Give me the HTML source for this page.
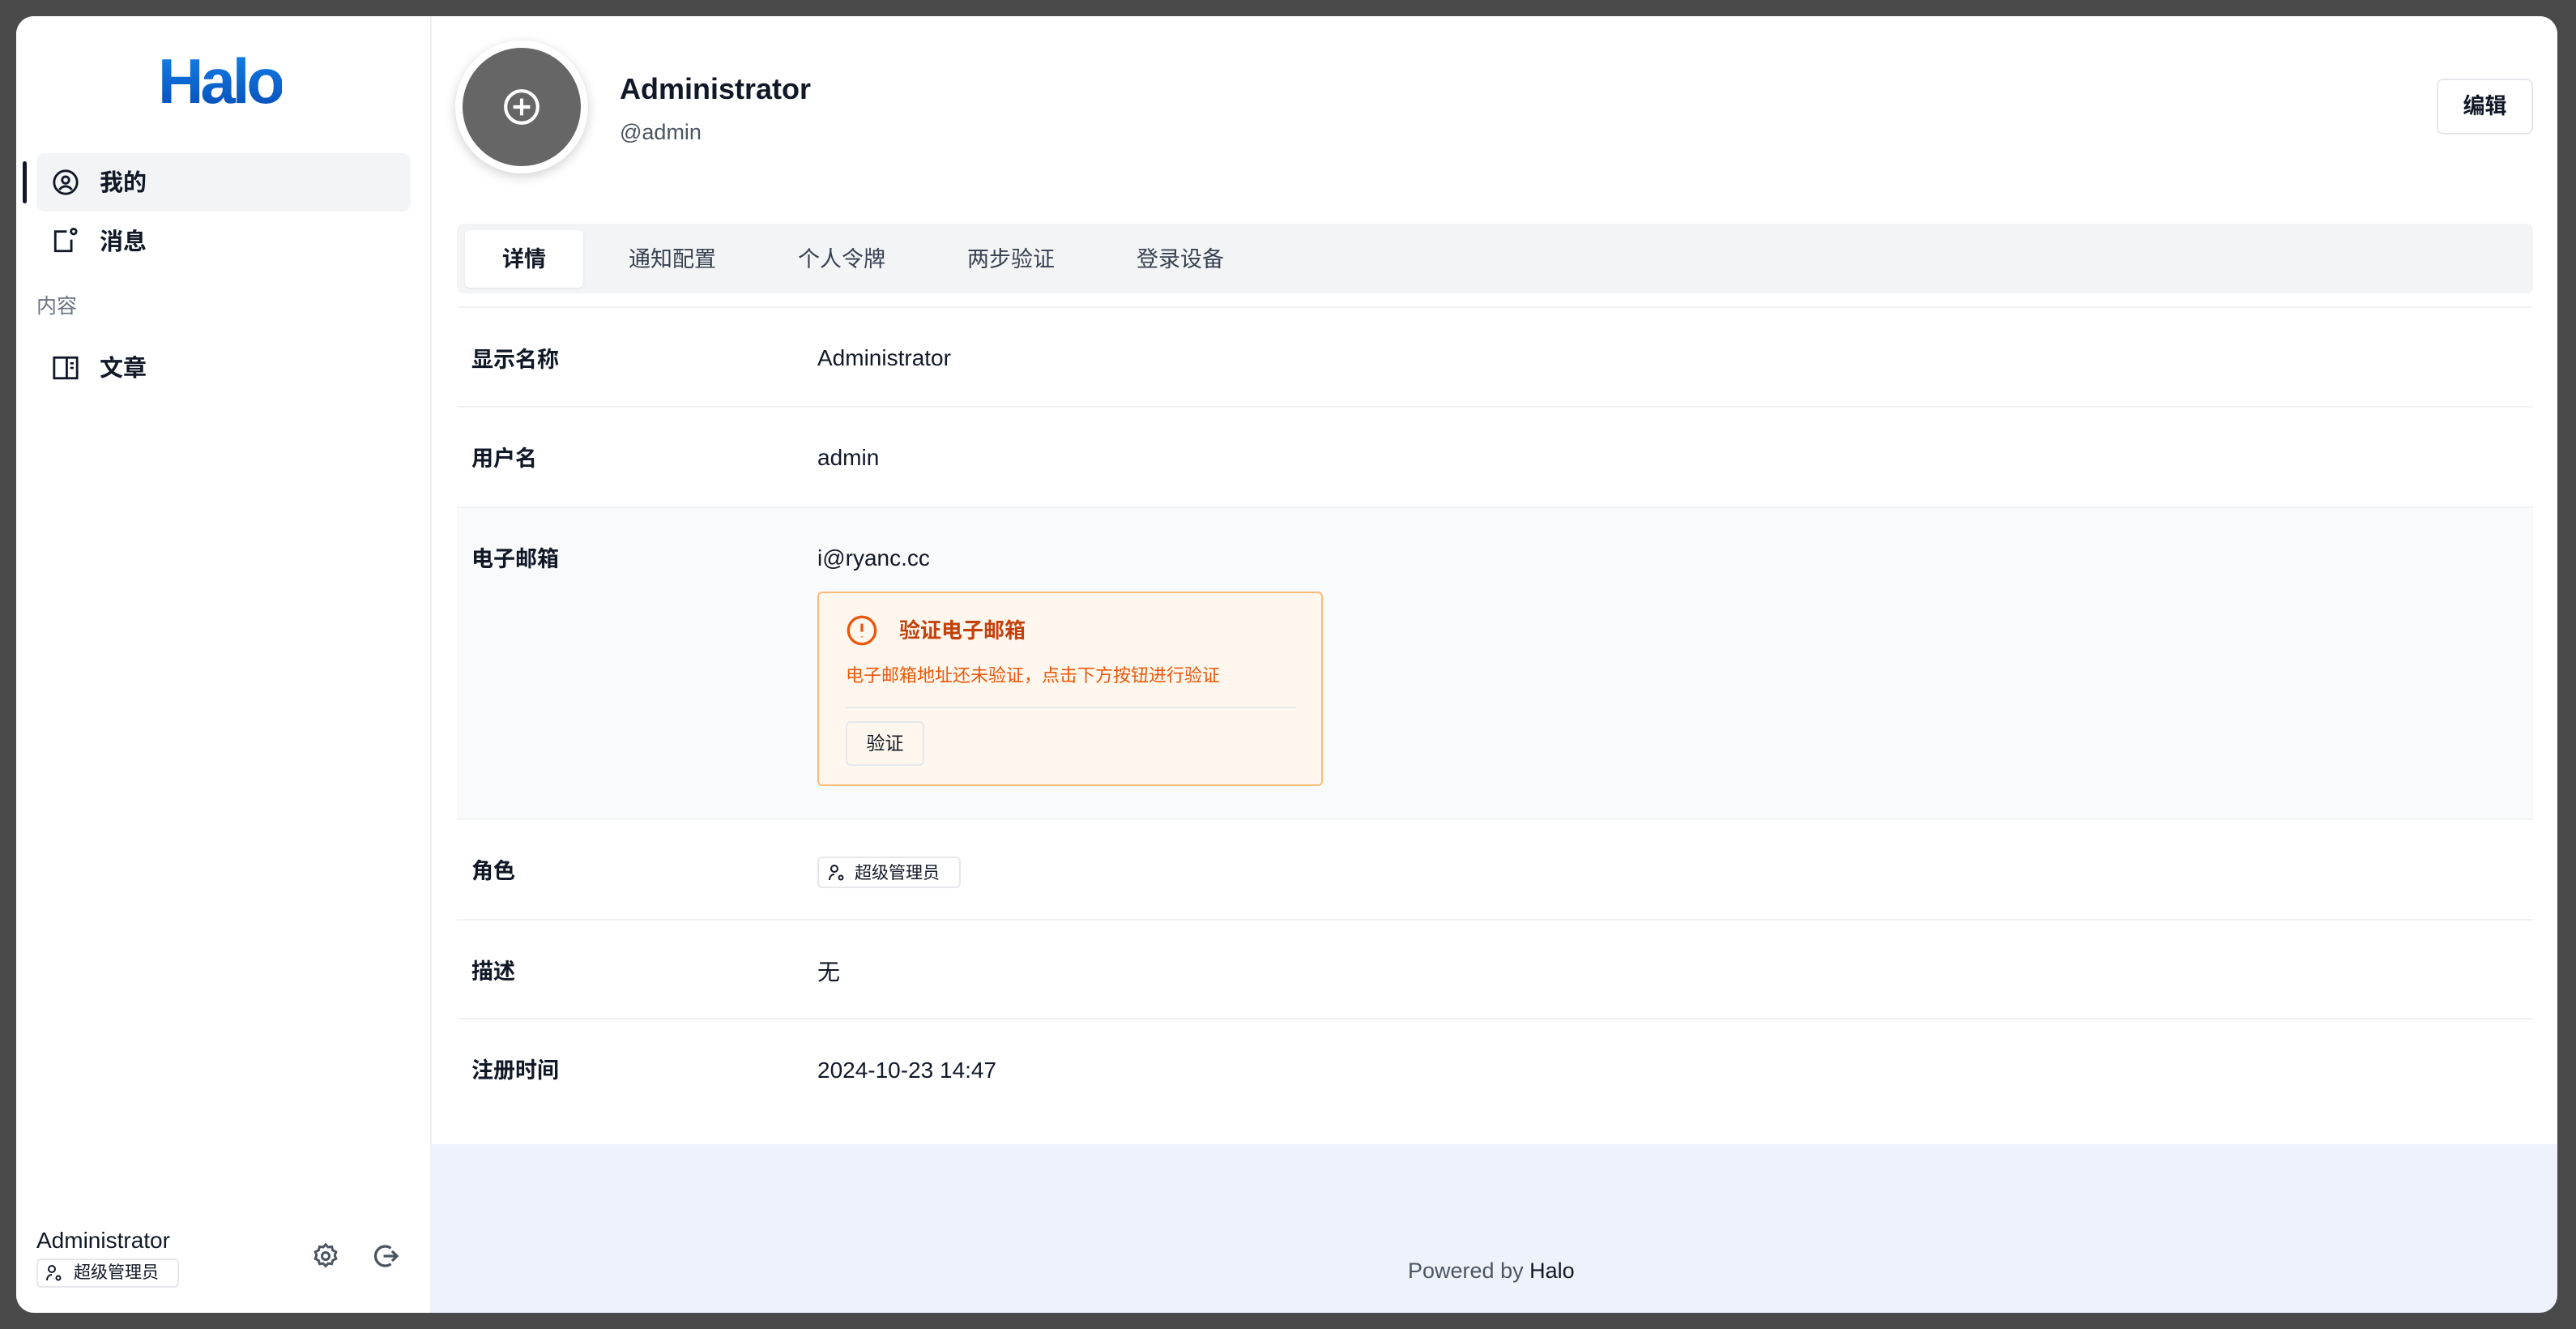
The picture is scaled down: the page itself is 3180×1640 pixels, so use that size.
<!DOCTYPE html>
<html><head><meta charset="utf-8"><style>
*{box-sizing:border-box;margin:0;padding:0}
body{width:3180px;height:1640px;background:#4a4a4a;font-family:"Liberation Sans","Noto Sans CJK SC",sans-serif;position:relative;overflow:hidden;color:#111827;line-height:1.2}
.win{position:absolute;left:20px;top:20px;width:3137px;height:1600px;background:#eef2fa;border-radius:22px;overflow:hidden}
.side{position:absolute;left:0;top:0;width:513px;height:1600px;background:#fff;border-right:2px solid #eef0f3}
.a{position:absolute;white-space:nowrap}
.main{position:absolute;left:513px;top:0;width:2624px;height:1392px;background:#fff}
.row{position:absolute;left:31px;width:2563px;border-bottom:2px solid #f1f2f4}
.lbl{position:absolute;left:18px;font-size:27px;font-weight:600;color:#111827}
.val{position:absolute;left:445px;font-size:28px;color:#111827}
.tab{position:absolute;top:284px;font-size:27px;color:#374151;transform:translateX(-50%)}
</style></head><body>
<div class="win">
<div class="side">
  <div class="a" style="left:175px;top:34px;font-size:78px;font-weight:700;letter-spacing:-4px;background:linear-gradient(180deg,#1485f0,#0648b0);-webkit-background-clip:text;color:transparent">Halo</div>
  <div class="a" style="left:8px;top:179px;width:5px;height:52px;background:#111827;border-radius:3px"></div>
  <div class="a" style="left:25px;top:169px;width:462px;height:72px;background:#f3f4f6;border-radius:10px"></div>
  <svg class="a" style="left:44px;top:188px" width="34" height="34" viewBox="0 0 24 24" fill="none" stroke="#111827" stroke-width="2"><circle cx="12" cy="12" r="10"/><circle cx="12" cy="10" r="3"/><path d="M6.5 18.5c1.5-2 3.3-3 5.5-3s4 1 5.5 3"/></svg>
  <div class="a" style="left:103px;top:189px;font-size:29px;font-weight:600">我的</div>
  <svg class="a" style="left:44px;top:260px" width="34" height="34" viewBox="0 0 24 24" fill="none" stroke="#111827" stroke-width="2"><path d="M13 4H3v17h14V11"/><circle cx="19" cy="4" r="2.3"/></svg>
  <div class="a" style="left:103px;top:262px;font-size:29px;font-weight:600">消息</div>
  <div class="a" style="left:25px;top:343px;font-size:25px;color:#6b7280">内容</div>
  <svg class="a" style="left:44px;top:417px" width="34" height="34" viewBox="0 0 24 24" fill="none" stroke="#111827" stroke-width="2"><rect x="2" y="3" width="20" height="18"/><path d="M13 3v18M16 8h3M16 12h3"/></svg>
  <div class="a" style="left:103px;top:418px;font-size:29px;font-weight:600">文章</div>
  <div class="a" style="left:25px;top:1494px;font-size:28px">Administrator</div>
  <div class="a" style="left:25px;top:1533px;width:176px;height:36px;border:2px solid #e5e7eb;border-radius:6px;font-size:21px;padding:3px 0 0 44px">超级管理员</div>
  <svg class="a" style="left:35px;top:1539px" width="24" height="24" viewBox="0 0 24 24" fill="none" stroke="#111827" stroke-width="2"><circle cx="9" cy="7" r="4"/><path d="M3 21c0-4 2.5-7 6-7"/><circle cx="17" cy="18" r="2.5"/></svg>
  <svg class="a" style="left:364px;top:1512px" width="36" height="36" viewBox="0 0 24 24" fill="none" stroke="#4b5563" stroke-width="2"><path d="M12 2.5l2 2.2 3-.4.8 2.9 2.7 1.4-1 2.8 1 2.8-2.7 1.4-.8 2.9-3-.4-2 2.2-2-2.2-3 .4-.8-2.9-2.7-1.4 1-2.8-1-2.8 2.7-1.4.8-2.9 3 .4z"/><circle cx="12" cy="12" r="3"/></svg>
  <svg class="a" style="left:437px;top:1512px" width="36" height="36" viewBox="0 0 24 24" fill="none" stroke="#4b5563" stroke-width="2.2"><path d="M17 5.5A8 8 0 1 0 17 18.5"/><path d="M11 12h11M18 8l4 4-4 4"/></svg>
</div>
<div class="main">
  <div class="a" style="left:29px;top:30px;width:164px;height:164px;border-radius:50%;background:#fff;box-shadow:0 4px 14px rgba(0,0,0,.18)"></div>
  <div class="a" style="left:38px;top:39px;width:146px;height:146px;border-radius:50%;background:#666"></div>
  <svg class="a" style="left:86px;top:87px" width="50" height="50" viewBox="0 0 24 24" fill="none" stroke="#fff" stroke-width="2"><circle cx="12" cy="12" r="9.5"/><path d="M12 7v10M7 12h10"/></svg>
  <div class="a" style="left:232px;top:68px;font-size:36px;font-weight:700">Administrator</div>
  <div class="a" style="left:232px;top:127px;font-size:27px;color:#4b5563">@admin</div>
  <div class="a" style="left:2475px;top:77px;width:119px;height:69px;border:2px solid #e5e7eb;border-radius:8px;font-size:27px;font-weight:600;text-align:center;line-height:65px">编辑</div>
  <div class="a" style="left:31px;top:256px;width:2563px;height:86px;background:#f3f4f6;border-radius:8px"></div>
  <div class="a" style="left:41px;top:264px;width:146px;height:71px;background:#fff;border-radius:6px;box-shadow:0 1px 3px rgba(0,0,0,.08)"></div>
  <div class="tab" style="left:114px;color:#111827;font-weight:600">详情</div>
  <div class="tab" style="left:297px">通知配置</div>
  <div class="tab" style="left:506px">个人令牌</div>
  <div class="tab" style="left:715px">两步验证</div>
  <div class="tab" style="left:924px">登录设备</div>
  <div class="a" style="left:31px;top:358px;width:2563px;height:2px;background:#f1f2f4"></div>
  <div class="row" style="top:361px;height:122px"><div class="lbl" style="top:47px">显示名称</div><div class="val" style="top:44px">Administrator</div></div>
  <div class="row" style="top:483px;height:124px"><div class="lbl" style="top:47px">用户名</div><div class="val" style="top:45px">admin</div></div>
  <div class="row" style="top:607px;height:385px;background:#f9fafb"><div class="lbl" style="top:47px">电子邮箱</div><div class="val" style="top:45px">i@ryanc.cc</div>
    <div class="a" style="left:445px;top:103px;width:624px;height:240px;background:#fff7ed;border:2px solid #fdba74;border-radius:6px">
      <svg class="a" style="left:33px;top:26px" width="40" height="40" viewBox="0 0 24 24" fill="none" stroke="#ea580c" stroke-width="2"><circle cx="12" cy="12" r="10"/><path d="M12 7v6M12 16.5v.5"/></svg>
      <div class="a" style="left:99px;top:31px;font-size:26px;font-weight:700;color:#c2410c">验证电子邮箱</div>
      <div class="a" style="left:33px;top:89px;font-size:22px;color:#ea580c">电子邮箱地址还未验证，点击下方按钮进行验证</div>
      <div class="a" style="left:33px;top:140px;width:556px;height:2px;background:#e5e7eb"></div>
      <div class="a" style="left:33px;top:158px;width:97px;height:55px;border:2px solid #e5e7eb;border-radius:6px;background:#fff7ed;font-size:23px;text-align:center;line-height:51px">验证</div>
    </div></div>
  <div class="row" style="top:992px;height:124px"><div class="lbl" style="top:47px">角色</div>
    <div class="a" style="left:445px;top:45px;width:177px;height:39px;border:2px solid #e5e7eb;border-radius:6px;font-size:21px;padding:6px 0 0 44px">超级管理员</div>
    <svg class="a" style="left:457px;top:53px" width="24" height="24" viewBox="0 0 24 24" fill="none" stroke="#111827" stroke-width="2"><circle cx="9" cy="7" r="4"/><path d="M3 21c0-4 2.5-7 6-7"/><circle cx="17" cy="18" r="2.5"/></svg></div>
  <div class="row" style="top:1116px;height:122px"><div class="lbl" style="top:47px">描述</div><div class="val" style="top:47px">无</div></div>
  <div class="row" style="top:1238px;height:154px;border:none"><div class="lbl" style="top:47px">注册时间</div><div class="val" style="top:46px">2024-10-23 14:47</div></div>
</div>
<div class="a" style="left:1718px;top:1532px;font-size:27px;color:#4b5563">Powered by <span style="color:#111827">Halo</span></div>
</div>
</body></html>
